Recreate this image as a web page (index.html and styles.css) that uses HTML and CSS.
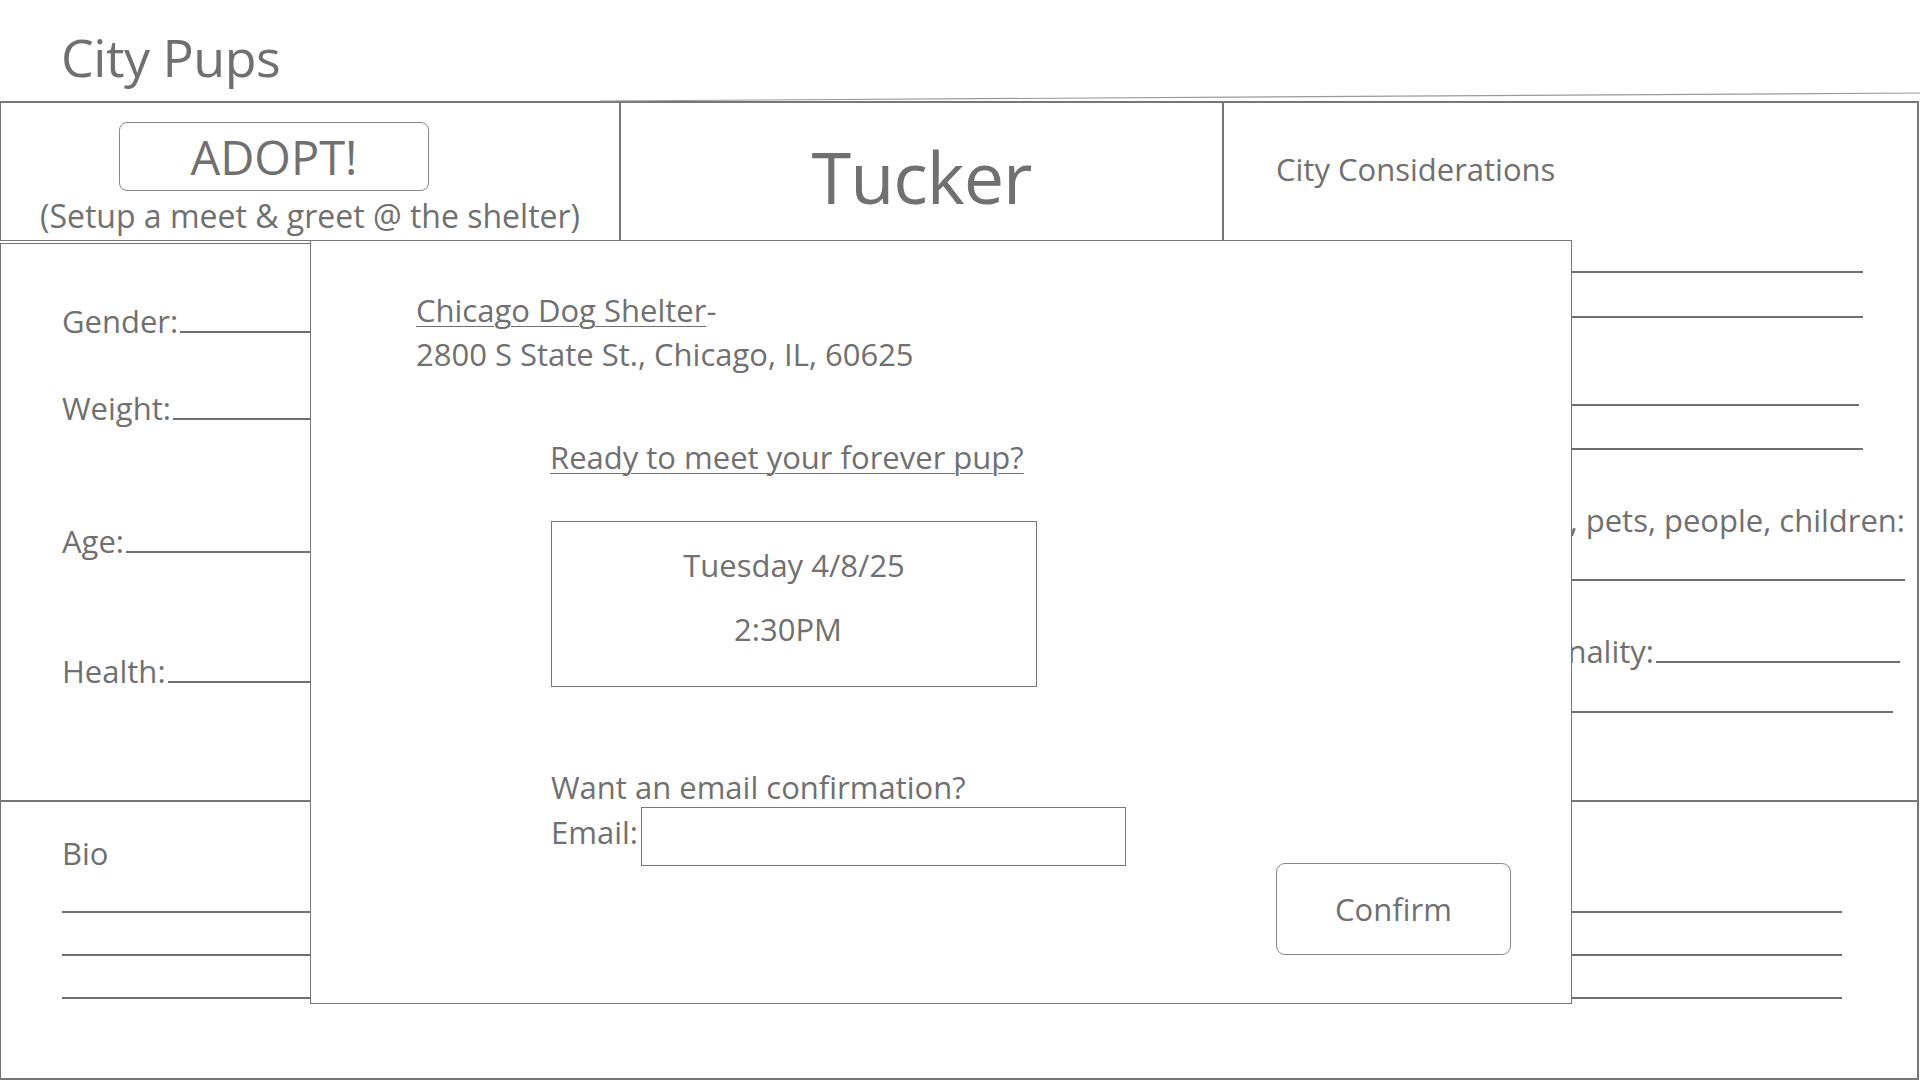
FILE: index.html
```html
<!DOCTYPE html>
<html lang="en">
<head>
<meta charset="utf-8">
<title>City Pups</title>
<link rel="stylesheet" href="styles.css">
</head>
<body>
<header class="brand">City Pups</header>
<main class="board">
  <svg class="sketch-line" width="1320" height="12" viewBox="0 0 1320 12"><line x1="0" y1="10" x2="1320" y2="2" stroke="#9a9a9a" stroke-width="1.2"/></svg>
  <section class="box adopt-box">
    <button class="adopt-btn">ADOPT!</button>
    <p class="adopt-note">(Setup a meet &amp; greet @ the shelter)</p>
  </section>
  <section class="box name-box">
    <h1 class="pup-name">Tucker</h1>
  </section>
  <section class="box city-box">
    <h2 class="city-title">City Considerations</h2>
    <div class="rline r1"></div>
    <div class="rline r2"></div>
    <div class="rline r3"></div>
    <div class="rline r4"></div>
    <div class="rfield r5"><span>Good with other dogs, pets, people, children:</span></div>
    <div class="rline r6"></div>
    <div class="rfield r7"><span class="rlabel">Personality:</span><span class="blank"></span></div>
    <div class="rline r8"></div>
  </section>
  <section class="box facts-box">
    <div class="fact f1"><span>Gender:</span><span class="blank"></span></div>
    <div class="fact f2"><span>Weight:</span><span class="blank"></span></div>
    <div class="fact f3"><span>Age:</span><span class="blank"></span></div>
    <div class="fact f4"><span>Health:</span><span class="blank"></span></div>
  </section>
  <section class="box bio-box">
    <h2 class="bio-title">Bio</h2>
    <div class="bline first"></div>
    <div class="bline"></div>
    <div class="bline"></div>
  </section>

  <div class="modal">
    <div class="shelter">
      <div><a class="link">Chicago Dog Shelter</a>-</div>
      <div>2800 S State St., Chicago, IL, 60625</div>
    </div>
    <div class="ready"><a class="link">Ready to meet your forever pup?</a></div>
    <div class="slot">
      <div class="slot-date">Tuesday 4/8/25</div>
      <div class="slot-time">2:30PM</div>
    </div>
    <div class="email-q">Want an email confirmation?</div>
    <div class="email-row"><label for="em">Email:</label><input id="em" class="email-input" type="text"></div>
    <div class="actions"><button class="confirm-btn">Confirm</button></div>
  </div>
</main>
</body>
</html>
```
FILE: styles.css
```css
* { box-sizing: border-box; }
html, body { margin: 0; padding: 0; background: #fff; }
body {
  width: 1920px;
  height: 1080px;
  overflow: hidden;
  font-family: "Open Sans", "Noto Sans", sans-serif;
  color: #707070;
}
.brand {
  height: 101px;
  padding: 27px 0 0 61px;
  font-size: 52px;
  line-height: 60px;
  letter-spacing: -0.5px;
}
.board {
  position: relative;
  display: grid;
  grid-template-columns: 620px 603px 696px;
  grid-template-rows: 140px 560px 279px;
  width: 1920px;
}
.box { border: 1px solid #777; }
.sketch-line { position: absolute; left: 600px; top: -10px; }

.adopt-box {
  grid-column: 1; grid-row: 1;
  border-width: 2px 1px 1px 1px;
  padding-top: 19px;
}
.adopt-btn {
  display: block;
  margin-left: 118px;
  width: 310px;
  height: 69px;
  border: 1px solid #888;
  border-radius: 8px;
  background: #fff;
  font-family: inherit;
  color: #707070;
  font-size: 47px;
  line-height: 66px;
  padding: 0;
}
.adopt-note {
  margin: 7px 0 0;
  text-align: center;
  font-size: 32px;
  line-height: 36px;
}
.name-box {
  grid-column: 2; grid-row: 1;
  border-width: 2px 1px 1px 1px;
  padding-top: 8px;
  display: flex; align-items: center; justify-content: center;
}
.pup-name {
  margin: 0;
  font-weight: 400;
  font-size: 72px;
  line-height: 80px;
  letter-spacing: -1px;
}
.city-box {
  grid-column: 3; grid-row: 1 / 3;
  border-width: 2px 2px 1px 1px;
  padding: 0 0 0 52px;
  display: flex; flex-direction: column;
}
.city-title {
  margin: 48px 0 0;
  font-weight: 400;
  font-size: 31px;
  line-height: 36px;
}
.rline { border-bottom: 2px solid #6f6f6f; width: 587px; }
.r1 { margin-top: 84px; }
.r2 { margin-top: 43px; }
.r3 { margin-top: 86px; width: 583px; }
.r4 { margin-top: 42px; }
.rfield {
  display: flex; align-items: baseline;
  font-size: 31px; line-height: 36px;
  white-space: nowrap;
}
.r5 { margin-top: 52px; width: 629px; justify-content: flex-end; }
.r6 { margin-top: 41px; width: 629px; }
.r7 { margin-top: 52px; width: 624px; }
.rlabel { width: 378px; text-align: right; }
.r8 { margin-top: 42px; width: 617px; }
.blank { flex: 1; border-bottom: 2px solid #6f6f6f; margin-left: 2px; }

.facts-box {
  grid-column: 1; grid-row: 2;
  margin-top: 2px;
  padding: 59px 0 0 61px;
  display: flex; flex-direction: column;
}
.fact {
  display: flex; align-items: baseline;
  font-size: 31px; line-height: 36px;
}
.f2 { margin-top: 51px; }
.f3 { margin-top: 97px; }
.f4 { margin-top: 94px; }

.bio-box {
  grid-column: 1 / 4; grid-row: 3;
  border-width: 1px 2px 2px 1px;
  padding: 33px 0 0 61px;
}
.bio-title {
  margin: 0;
  font-weight: 400;
  font-size: 31px;
  line-height: 36px;
}
.bline { width: 1780px; border-bottom: 2px solid #6f6f6f; margin-top: 41px; }
.bline.first { margin-top: 40px; }

.modal {
  position: absolute;
  left: 310px; top: 139px;
  width: 1262px; height: 764px;
  background: #fff;
  border: 1px solid #777;
  padding: 0 0 0 105px;
  font-size: 31px;
  line-height: 36px;
}
.link { text-decoration: underline; text-underline-offset: 4px; text-decoration-thickness: 1px; }
.shelter { margin-top: 47px; line-height: 44px; }
.ready { margin: 63px 0 0 134px; }
.slot {
  margin: 46px 0 0 135px;
  width: 486px; height: 166px;
  border: 1px solid #777;
  text-align: center;
  padding-top: 25px;
}
.slot-time { margin-top: 28px; padding-right: 12px; }
.email-q { margin: 82px 0 0 135px; }
.email-row { display: flex; align-items: flex-start; margin: 2px 0 0 135px; }
.email-row label { padding-top: 7px; }
.email-input {
  margin: 0 0 0 3px;
  width: 485px; height: 59px;
  border: 1px solid #777;
  background: #fff;
  padding: 0;
}
.actions { display: flex; justify-content: flex-end; padding-right: 60px; margin-top: -3px; }
.confirm-btn {
  width: 235px; height: 92px;
  border: 1px solid #888;
  border-radius: 9px;
  background: #fff;
  font-family: inherit;
  color: #707070;
  font-size: 31px;
  padding: 0;
}
```
